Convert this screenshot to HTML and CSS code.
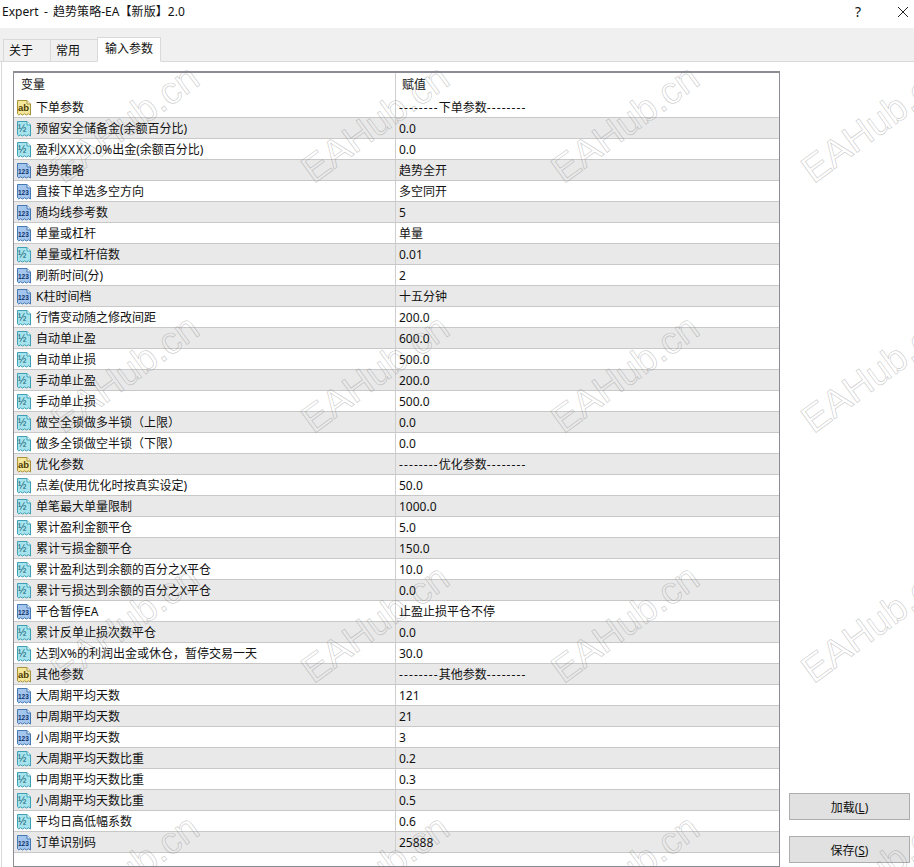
FILE: index.html
```html
<!DOCTYPE html>
<html lang="en">
<head>
  <meta charset="UTF-8">
  <title>Expert - 趋势策略-EA【新版】2.0</title>
  <link rel="stylesheet" href="styles.css">
</head>
<body>
  <!-- Shared file shapes for the parameter icons -->
  <svg class="icon-defs" width="0" height="0">
    <symbol id="file-ab" viewBox="0 0 16 16">
      <path d="M1.5 .5H11L14.5 4V15L12.5 13.8L10.5 15L8.5 13.8L6.5 15L4.5 13.8L2.8 15L1.5 13.8Z" fill="#f5e79a" stroke="#a8923a"/>
      <path d="M11 .5V4H14.5" fill="#fffbe0" stroke="#a8923a"/>
    </symbol>
    <symbol id="file-dbl" viewBox="0 0 16 16">
      <path d="M1.5 .5H11L14.5 4V15L12.5 13.8L10.5 15L8.5 13.8L6.5 15L4.5 13.8L2.8 15L1.5 13.8Z" fill="#a6e3ec" stroke="#3f9fb4"/>
      <path d="M11 .5V4H14.5" fill="#e8fbfd" stroke="#3f9fb4"/>
    </symbol>
    <symbol id="file-int" viewBox="0 0 16 16">
      <path d="M1.5 .5H11L14.5 4V15L12.5 13.8L10.5 15L8.5 13.8L6.5 15L4.5 13.8L2.8 15L1.5 13.8Z" fill="#a4c6ec" stroke="#4678b4"/>
      <path d="M11 .5V4H14.5" fill="#e6f1fc" stroke="#4678b4"/>
    </symbol>
  </svg>

  <div class="window">
    <div class="title-bar">
      <div class="title-text">Expert - 趋势策略-EA【新版】2.0</div>
      <div class="title-help">?</div>
      <svg class="title-close" width="10" height="10" viewBox="0 0 10 10"><path d="M0 0L10 10M10 0L0 10" stroke="#222" fill="none"/></svg>
    </div>

    <div class="tab-strip">
      <div class="tab">关于</div>
      <div class="tab">常用</div>
      <div class="tab active">输入参数</div>
    </div>

    <div class="page">
      <div class="param-table">
        <div class="param-head">
          <div class="col-name">变量</div>
          <div class="col-value">赋值</div>
        </div>
        <div class="param-rows">
          <div class="row"><div class="cell-name"><svg class="icon"><use href="#file-ab"/><text x="2" y="11" class="icon-text ab">ab</text></svg>下单参数</div><div class="cell-value"><span class="dash">--------</span>下单参数<span class="dash">--------</span></div></div>
          <div class="row"><div class="cell-name"><svg class="icon"><use href="#file-dbl"/><text x="2" y="11" class="icon-text dbl">½</text></svg>预留安全储备金(余额百分比)</div><div class="cell-value">0.0</div></div>
          <div class="row"><div class="cell-name"><svg class="icon"><use href="#file-dbl"/><text x="2" y="11" class="icon-text dbl">½</text></svg>盈利<span class="wide">XXXX</span>.0%出金(余额百分比)</div><div class="cell-value">0.0</div></div>
          <div class="row"><div class="cell-name"><svg class="icon"><use href="#file-int"/><text x="2" y="11" class="icon-text int">123</text></svg>趋势策略</div><div class="cell-value">趋势全开</div></div>
          <div class="row"><div class="cell-name"><svg class="icon"><use href="#file-int"/><text x="2" y="11" class="icon-text int">123</text></svg>直接下单选多空方向</div><div class="cell-value">多空同开</div></div>
          <div class="row"><div class="cell-name"><svg class="icon"><use href="#file-int"/><text x="2" y="11" class="icon-text int">123</text></svg>随均线参考数</div><div class="cell-value">5</div></div>
          <div class="row"><div class="cell-name"><svg class="icon"><use href="#file-int"/><text x="2" y="11" class="icon-text int">123</text></svg>单量或杠杆</div><div class="cell-value">单量</div></div>
          <div class="row"><div class="cell-name"><svg class="icon"><use href="#file-dbl"/><text x="2" y="11" class="icon-text dbl">½</text></svg>单量或杠杆倍数</div><div class="cell-value">0.01</div></div>
          <div class="row"><div class="cell-name"><svg class="icon"><use href="#file-int"/><text x="2" y="11" class="icon-text int">123</text></svg>刷新时间(分)</div><div class="cell-value">2</div></div>
          <div class="row"><div class="cell-name"><svg class="icon"><use href="#file-int"/><text x="2" y="11" class="icon-text int">123</text></svg>K柱时间档</div><div class="cell-value">十五分钟</div></div>
          <div class="row"><div class="cell-name"><svg class="icon"><use href="#file-dbl"/><text x="2" y="11" class="icon-text dbl">½</text></svg>行情变动随之修改间距</div><div class="cell-value">200.0</div></div>
          <div class="row"><div class="cell-name"><svg class="icon"><use href="#file-dbl"/><text x="2" y="11" class="icon-text dbl">½</text></svg>自动单止盈</div><div class="cell-value">600.0</div></div>
          <div class="row"><div class="cell-name"><svg class="icon"><use href="#file-dbl"/><text x="2" y="11" class="icon-text dbl">½</text></svg>自动单止损</div><div class="cell-value">500.0</div></div>
          <div class="row"><div class="cell-name"><svg class="icon"><use href="#file-dbl"/><text x="2" y="11" class="icon-text dbl">½</text></svg>手动单止盈</div><div class="cell-value">200.0</div></div>
          <div class="row"><div class="cell-name"><svg class="icon"><use href="#file-dbl"/><text x="2" y="11" class="icon-text dbl">½</text></svg>手动单止损</div><div class="cell-value">500.0</div></div>
          <div class="row"><div class="cell-name"><svg class="icon"><use href="#file-dbl"/><text x="2" y="11" class="icon-text dbl">½</text></svg>做空全锁做多半锁（上限）</div><div class="cell-value">0.0</div></div>
          <div class="row"><div class="cell-name"><svg class="icon"><use href="#file-dbl"/><text x="2" y="11" class="icon-text dbl">½</text></svg>做多全锁做空半锁（下限）</div><div class="cell-value">0.0</div></div>
          <div class="row"><div class="cell-name"><svg class="icon"><use href="#file-ab"/><text x="2" y="11" class="icon-text ab">ab</text></svg>优化参数</div><div class="cell-value"><span class="dash">--------</span>优化参数<span class="dash">--------</span></div></div>
          <div class="row"><div class="cell-name"><svg class="icon"><use href="#file-dbl"/><text x="2" y="11" class="icon-text dbl">½</text></svg>点差(使用优化时按真实设定)</div><div class="cell-value">50.0</div></div>
          <div class="row"><div class="cell-name"><svg class="icon"><use href="#file-dbl"/><text x="2" y="11" class="icon-text dbl">½</text></svg>单笔最大单量限制</div><div class="cell-value">1000.0</div></div>
          <div class="row"><div class="cell-name"><svg class="icon"><use href="#file-dbl"/><text x="2" y="11" class="icon-text dbl">½</text></svg>累计盈利金额平仓</div><div class="cell-value">5.0</div></div>
          <div class="row"><div class="cell-name"><svg class="icon"><use href="#file-dbl"/><text x="2" y="11" class="icon-text dbl">½</text></svg>累计亏损金额平仓</div><div class="cell-value">150.0</div></div>
          <div class="row"><div class="cell-name"><svg class="icon"><use href="#file-dbl"/><text x="2" y="11" class="icon-text dbl">½</text></svg>累计盈利达到余额的百分之X平仓</div><div class="cell-value">10.0</div></div>
          <div class="row"><div class="cell-name"><svg class="icon"><use href="#file-dbl"/><text x="2" y="11" class="icon-text dbl">½</text></svg>累计亏损达到余额的百分之X平仓</div><div class="cell-value">0.0</div></div>
          <div class="row"><div class="cell-name"><svg class="icon"><use href="#file-int"/><text x="2" y="11" class="icon-text int">123</text></svg>平仓暂停EA</div><div class="cell-value">止盈止损平仓不停</div></div>
          <div class="row"><div class="cell-name"><svg class="icon"><use href="#file-dbl"/><text x="2" y="11" class="icon-text dbl">½</text></svg>累计反单止损次数平仓</div><div class="cell-value">0.0</div></div>
          <div class="row"><div class="cell-name"><svg class="icon"><use href="#file-dbl"/><text x="2" y="11" class="icon-text dbl">½</text></svg>达到X%的利润出金或休仓，暂停交易一天</div><div class="cell-value">30.0</div></div>
          <div class="row"><div class="cell-name"><svg class="icon"><use href="#file-ab"/><text x="2" y="11" class="icon-text ab">ab</text></svg>其他参数</div><div class="cell-value"><span class="dash">--------</span>其他参数<span class="dash">--------</span></div></div>
          <div class="row"><div class="cell-name"><svg class="icon"><use href="#file-int"/><text x="2" y="11" class="icon-text int">123</text></svg>大周期平均天数</div><div class="cell-value">121</div></div>
          <div class="row"><div class="cell-name"><svg class="icon"><use href="#file-int"/><text x="2" y="11" class="icon-text int">123</text></svg>中周期平均天数</div><div class="cell-value">21</div></div>
          <div class="row"><div class="cell-name"><svg class="icon"><use href="#file-int"/><text x="2" y="11" class="icon-text int">123</text></svg>小周期平均天数</div><div class="cell-value">3</div></div>
          <div class="row"><div class="cell-name"><svg class="icon"><use href="#file-dbl"/><text x="2" y="11" class="icon-text dbl">½</text></svg>大周期平均天数比重</div><div class="cell-value">0.2</div></div>
          <div class="row"><div class="cell-name"><svg class="icon"><use href="#file-dbl"/><text x="2" y="11" class="icon-text dbl">½</text></svg>中周期平均天数比重</div><div class="cell-value">0.3</div></div>
          <div class="row"><div class="cell-name"><svg class="icon"><use href="#file-dbl"/><text x="2" y="11" class="icon-text dbl">½</text></svg>小周期平均天数比重</div><div class="cell-value">0.5</div></div>
          <div class="row"><div class="cell-name"><svg class="icon"><use href="#file-dbl"/><text x="2" y="11" class="icon-text dbl">½</text></svg>平均日高低幅系数</div><div class="cell-value">0.6</div></div>
          <div class="row"><div class="cell-name"><svg class="icon"><use href="#file-int"/><text x="2" y="11" class="icon-text int">123</text></svg>订单识别码</div><div class="cell-value">25888</div></div>
        </div>
      </div>

      <div class="side-buttons">
        <button class="side-button">加载(<u>L</u>)</button>
        <button class="side-button">保存(<u>S</u>)</button>
      </div>
    </div>
  </div>

  <!-- Watermark lies over the whole window -->
  <div class="watermark-layer">
    <div class="watermarks">
      <div class="mark"><span>EAHub.cn</span></div>
      <div class="mark"><span>EAHub.cn</span></div>
      <div class="mark"><span>EAHub.cn</span></div>
      <div class="mark"><span>EAHub.cn</span></div>
      <div class="mark"><span>EAHub.cn</span></div>
      <div class="mark"><span>EAHub.cn</span></div>
      <div class="mark"><span>EAHub.cn</span></div>
      <div class="mark"><span>EAHub.cn</span></div>
      <div class="mark"><span>EAHub.cn</span></div>
      <div class="mark"><span>EAHub.cn</span></div>
      <div class="mark"><span>EAHub.cn</span></div>
      <div class="mark"><span>EAHub.cn</span></div>
      <div class="mark"><span>EAHub.cn</span></div>
      <div class="mark"><span>EAHub.cn</span></div>
      <div class="mark"><span>EAHub.cn</span></div>
      <div class="mark"><span>EAHub.cn</span></div>
    </div>
  </div>
</body>
</html>
```

FILE: styles.css
```css
body, html {
  margin: 0;
  padding: 0;
  height: 100%;
  overflow: hidden;
  background-color: white;
  font-family: "Noto Sans", "Noto Sans CJK SC", sans-serif;
  font-size: 12px;
  color: #111;
}

.icon-defs {
  position: absolute;
}

.window {
  display: flex;
  flex-direction: column;
  height: 867px;
}

/* Title bar */
.title-bar {
  display: flex;
  align-items: center;
  height: 28px;
  flex-shrink: 0;
  padding-left: 2px;
  padding-bottom: 4px;
  box-sizing: border-box;
}

.title-text {
  flex: 1;
  line-height: 16px;
  word-spacing: 2px;
  letter-spacing: 0.05px;
}

.title-help {
  width: 12px;
  margin-right: 34px;
  text-align: center;
  font-size: 14px;
  line-height: 16px;
}

.title-close {
  margin-right: 6px;
}

/* Tabs */
.tab-strip {
  display: flex;
  align-items: flex-end;
  height: 34px;
  flex-shrink: 0;
  box-sizing: border-box;
  padding-left: 3px;
  background-color: #f0f0f0;
  border-bottom: 1px solid #d9d9d9;
}

.tab {
  width: 47px;
  height: 23px;
  margin-bottom: -1px;
  box-sizing: border-box;
  padding: 2px 0 0 5px;
  line-height: 18px;
  border: 1px solid #d9d9d9;
  border-right: none;
}

.tab.active {
  width: 64px;
  height: 25px;
  padding-left: 7px;
  background-color: white;
  border-right: 1px solid #d9d9d9;
  border-bottom: 1px solid white;
}

/* Page */
.page {
  flex: 1;
  display: flex;
  min-height: 0;
  padding: 9px 4px 0 13px;
  border-left: 1px solid #d9d9d9;
  margin-left: 1px;
  box-sizing: border-box;
}

.param-table {
  width: 767px;
  flex-shrink: 0;
  height: 796px;
  box-sizing: border-box;
  border: 1px solid #8c8c94;
  border-top-width: 2px;
  margin-left: -2px;
  display: flex;
  flex-direction: column;
}

.param-head {
  display: flex;
  height: 24px;
  flex-shrink: 0;
  line-height: 24px;
}

.col-name {
  width: 382px;
  padding-left: 7px;
  box-sizing: border-box;
  border-right: 1px solid #cfcfcf;
}

.col-value {
  padding-left: 6px;
}

.row {
  display: flex;
  height: 21px;
  box-sizing: border-box;
  border-bottom: 1px solid #c8c8c8;
  line-height: 20px;
}

.row:nth-child(even) {
  background-color: #e9e9e9;
}

.cell-name {
  display: flex;
  align-items: center;
  width: 382px;
  box-sizing: border-box;
  padding-left: 2px;
  padding-top: 2px;
  border-right: 1px solid #cfcfcf;
  white-space: nowrap;
}

.cell-value {
  padding-left: 3px;
  padding-top: 1px;
  white-space: nowrap;
}

.dash {
  letter-spacing: 1.1px;
}

.wide {
  letter-spacing: 1px;
}

.icon {
  width: 16px;
  height: 16px;
  margin-right: 4px;
  flex-shrink: 0;
}

.icon-text {
  font-family: "Liberation Sans", sans-serif;
  font-weight: bold;
}

.icon-text.ab {
  font-size: 9.5px;
  fill: #4a3c06;
}

.icon-text.dbl {
  font-size: 10px;
  fill: #0d5a6e;
  font-weight: normal;
}

.icon-text.int {
  font-size: 6.5px;
  fill: #0f3270;
}

/* Buttons on the right */
.side-buttons {
  display: flex;
  flex-direction: column;
  justify-content: flex-end;
  gap: 16px;
  margin-left: 9px;
  padding-bottom: 4px;
}

.side-button {
  width: 121px;
  height: 27px;
  padding: 0;
  font-family: inherit;
  font-size: 12px;
  color: #111;
  background-color: #e1e1e1;
  border: 1px solid #adadad;
}

/* Watermark */
.watermark-layer {
  position: absolute;
  top: 0;
  left: 0;
  width: 914px;
  height: 867px;
  overflow: hidden;
  pointer-events: none;
}

.watermarks {
  display: grid;
  grid-template-columns: repeat(4, 250px);
  grid-auto-rows: 250px;
  margin: -61px 0 0 67px;
}

.mark {
  position: relative;
}

.mark span {
  position: absolute;
  left: 0;
  bottom: 0;
  line-height: 1;
  font-family: "Liberation Sans", sans-serif;
  font-size: 38px;
  color: transparent;
  -webkit-text-stroke: 0.7px rgba(120, 120, 120, 0.38);
  transform-origin: left bottom;
  transform: rotate(-36deg);
  white-space: nowrap;
}
```
